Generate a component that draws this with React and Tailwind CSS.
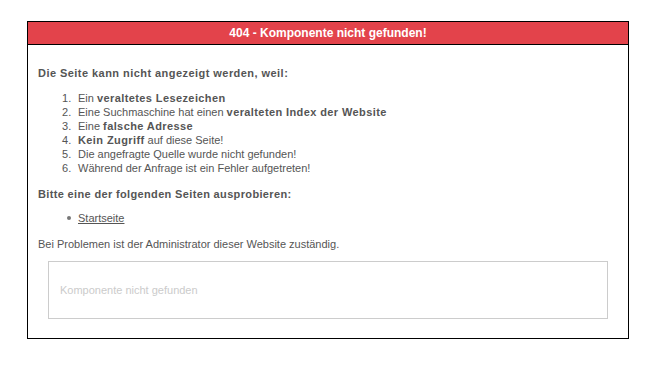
export default function App() {
  const reasons = [
    <>Ein <b className="tracking-[0.4px]">veraltetes Lesezeichen</b></>,
    <>Eine Suchmaschine hat einen <b className="tracking-[0.4px]">veralteten Index der Website</b></>,
    <>Eine <b className="tracking-[0.4px]">falsche Adresse</b></>,
    <><b className="tracking-[0.4px]">Kein Zugriff</b> auf diese Seite!</>,
    <>Die angefragte Quelle wurde nicht gefunden!</>,
    <>Während der Anfrage ist ein Fehler aufgetreten!</>,
  ];

  return (
    <div className="w-[668px] h-[376px] bg-white pt-[21px] pl-[27px] font-['Liberation_Sans',Arial,sans-serif] text-[11px] leading-[14px] text-[#555]">
      <div className="w-[602px] h-[318px] border border-black flex flex-col">
        <div className="h-[23px] bg-[#e3434b] border-b border-black flex items-center justify-center text-white text-[12px] font-bold">
          404 - Komponente nicht gefunden!
        </div>
        <div className="flex flex-col gap-[11px] pt-[21px] px-[10px]">
          <p className="font-bold text-[11px] tracking-[0.45px]">Die Seite kann nicht angezeigt werden, weil:</p>
          <ol className="pl-[24px]">
            {reasons.map((r, i) => (
              <li key={i} className="flex">
                <span className="w-[16px]">{i + 1}.</span>
                <span>{r}</span>
              </li>
            ))}
          </ol>
          <p className="font-bold text-[11px] tracking-[0.35px] pt-[1px] -mb-[1px]">Bitte eine der folgenden Seiten ausprobieren:</p>
          <ul className="pl-[24px]">
            <li className="flex items-center">
              <span className="w-[4px] h-[4px] rounded-full bg-[#777] ml-[5px] mr-[7px]" />
              <a href="#" className="underline text-[#555]">Startseite</a>
            </li>
          </ul>
          <p className="pt-[1px] -mb-[1px]">Bei Problemen ist der Administrator dieser Website zuständig.</p>
          <div className="mx-[10px] h-[58px] border border-[#ccc] flex items-center px-[11px] text-[#cbcbcb]">
            Komponente nicht gefunden
          </div>
        </div>
      </div>
    </div>
  );
}
